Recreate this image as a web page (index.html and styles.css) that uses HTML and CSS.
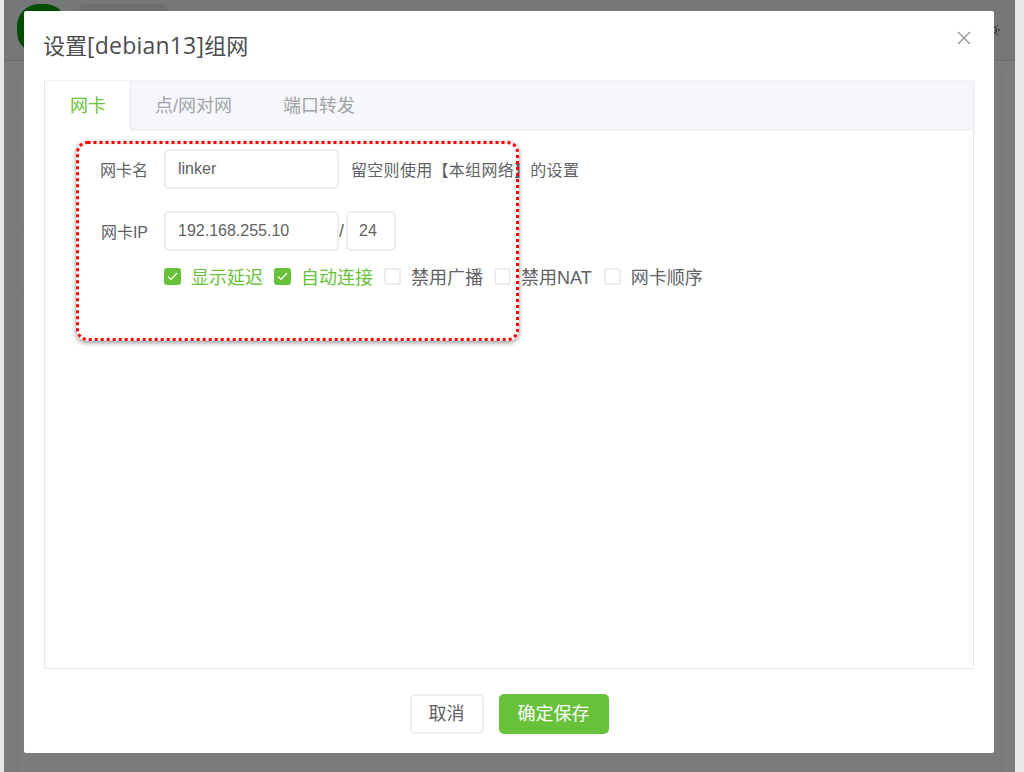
FILE: index.html
```html
<!DOCTYPE html>
<html lang="zh">
<head>
<meta charset="utf-8">
<title>设置组网</title>
<link rel="stylesheet" href="styles.css">
</head>
<body>
<div class="app">
  <header class="app-head">
    <div class="logo"></div>
    <div class="pill"></div>
    <svg class="sun" width="16" height="16" viewBox="0 0 16 16"><circle cx="8" cy="8" r="3.5" fill="none" stroke="#333"/><path d="M8 1v2M8 13v2M1 8h2M13 8h2M3 3l1.5 1.5M11.500 11.500 13 13M3 13l1.500-1.500M11.500 4.500 13 3" stroke="#333"/></svg>
  </header>
  <div class="app-body">
    <div class="app-card">
      <div class="card-row head"></div>
      <div class="card-row mid"></div>
      <div class="card-row tall"></div>
      <div class="card-row tall"></div>
      <div class="card-row rest"></div>
    </div>
  </div>
  <div class="mask">
    <section class="dialog">
      <h2 class="dialog-title">设置<span class="latin">[debian13]</span>组网</h2>
      <svg class="close" width="14" height="14" viewBox="0 0 14 14"><path d="M1 1l12 12M13 1L1 13" stroke="#8c8f96" stroke-width="1.100" fill="none"/></svg>
      <div class="tabs">
        <nav class="tab-bar">
          <span class="tab active">网卡</span>
          <span class="tab">点/网对网</span>
          <span class="tab">端口转发</span>
        </nav>
        <div class="tab-pane">
          <div class="form-row first">
            <label class="form-label">网卡名</label>
            <div class="input wide">linker</div>
            <span class="hint">留空则使用【本组网络】的设置</span>
          </div>
          <div class="form-row second">
            <label class="form-label">网卡IP</label>
            <div class="input wide">192.168.255.10</div>
            <span class="slash">/</span>
            <div class="input mask-input">24</div>
          </div>
          <div class="checks">
            <span class="check on"><i class="box"><svg width="11" height="9" viewBox="0 0 11 9"><path d="M1 4.500l3 3 6-6.500" fill="none" stroke="#fff" stroke-width="1.200"/></svg></i>显示延迟</span>
            <span class="check on"><i class="box"><svg width="11" height="9" viewBox="0 0 11 9"><path d="M1 4.500l3 3 6-6.500" fill="none" stroke="#fff" stroke-width="1.200"/></svg></i>自动连接</span>
            <span class="check"><i class="box"></i>禁用广播</span>
            <span class="check wider"><i class="box"></i>禁用NAT</span>
            <span class="check"><i class="box"></i>网卡顺序</span>
          </div>
        </div>
      </div>
      <footer class="dialog-foot">
        <button class="btn">取消</button>
        <button class="btn primary">确定保存</button>
      </footer>
      <div class="highlight">
        <svg class="dots" width="443" height="200" viewBox="0 0 443 200"><rect x="1.500" y="1.500" width="440" height="197" rx="10" fill="none" stroke="#f00" stroke-width="3" stroke-dasharray="3 3"/></svg>
      </div>
    </section>
  </div>
</div>
</body>
</html>
```
FILE: styles.css
```css
* { box-sizing: border-box; }
html, body { margin: 0; height: 100%; }
body {
  background: #e8e8e8;
  font-family: "Liberation Sans", "Noto Sans CJK SC", sans-serif;
  font-size: 14px;
  color: #606266;
  overflow: hidden;
}
.app {
  position: relative;
  margin: 0 9px 0 4px;
  height: 100%;
  background: #f8f8f8;
  display: flex;
  flex-direction: column;
}
.app-head {
  height: 61px;
  background: #eceef0;
  border-bottom: 1px solid #d8d8d8;
  display: flex;
  align-items: flex-start;
  padding: 4px 0 0 13px;
}
.logo { width: 50px; height: 50px; border-radius: 22px; background: #009a00; }
.pill { width: 88px; height: 32px; margin: 0 0 0 12px; border-radius: 6px; background: #dcdcdc; }
.sun { margin: 18px 14px 0 auto; }
.app-body { flex: 1; padding: 12px 13px 0; }
.app-card {
  height: 100%;
  border: 1px solid #ececec;
  border-bottom: 0;
  display: flex;
  flex-direction: column;
}
.card-row { border-bottom: 1px solid #f0f0f0; }
.head { height: 41px; }
.mid { height: 41px; }
.tall { height: 70px; }
.rest { flex: 1; border-bottom: 0; }
.mask {
  position: absolute;
  inset: 0;
  background: rgba(0, 0, 0, .5);
  padding: 11px 21px 19px 20px;
}
.dialog {
  position: relative;
  height: 742px;
  background: #fff;
  border-radius: 2px;
  padding: 0 20px;
  display: flex;
  flex-direction: column;
}
.dialog-title {
  margin: 0 0 0 -1px;
  padding-top: 19px;
  height: 69px;
  font-size: 22px;
  line-height: 30px;
  font-weight: 400;
  color: #4a4c50;
}
.latin { font-family: "Open Sans", sans-serif; font-size: 23px; letter-spacing: .2px; }
.close { position: absolute; right: 23px; top: 20px; }
.tabs {
  height: 589px;
  border: 1px solid #e4e7ed;
  border-top-color: #f0f0f5;
  display: flex;
  flex-direction: column;
}
.tab-bar {
  display: flex;
  height: 49px;
  background: #f5f7fa;
  border-bottom: 1px solid #e9e9f0;
  font-size: 18px;
  color: #a1a3a8;
}
.tab { padding: 0 25px; line-height: 50px; height: 49px; white-space: nowrap; }
.tab:nth-child(2) { padding-left: 24px; padding-right: 26px; }
.tab.active {
  background: #fff;
  color: #67c23a;
  width: 86px;
  padding: 0 0 0 25px;
  border-right: 1px solid #e4e7ed;
  border-bottom: 1px solid #fff;
}
.tab-pane { flex: 1; padding: 19px 0 0 55px; font-size: 16px; }
.form-row { display: flex; align-items: center; height: 40px; }
.second { margin-top: 22px; }
.form-label { width: 48px; text-align: right; font-size: 16px; margin-right: 16px; }
.input {
  height: 40px;
  border: 2px solid #ececf2;
  border-radius: 5px;
  line-height: 35px;
  padding-left: 12px;
  font-size: 16px;
  color: #606266;
}
.wide { width: 175px; }
.mask-input { width: 50px; padding-left: 11px; }
.hint { margin-left: 12px; letter-spacing: .3px; }
.slash { width: 7px; margin-left: 0; font-size: 18px; }
.checks { display: flex; height: 40px; align-items: center; margin: 5px 0 0 64px; font-size: 18px; }
.check { display: flex; align-items: center; margin-right: 11px; white-space: nowrap; }
.check.wider { margin-right: 12px; }
.check.on { color: #67c23a; }
.box {
  width: 17px; height: 17px; margin-right: 10px;
  border: 2px solid #eaecf0; border-radius: 3px;
  display: flex; align-items: center; justify-content: center;
}
.check.on .box { background: #67c23a; border-color: #67c23a; }
.dialog-foot {
  flex: 1;
  display: flex;
  justify-content: center;
  gap: 15px;
  padding-top: 25px;
}
.btn {
  width: 74px;
  height: 40px;
  border: 2px solid #ececf2;
  border-radius: 5px;
  background: #fff;
  font: 18px "Liberation Sans", "Noto Sans CJK SC", sans-serif;
  color: #606266;
  padding: 0 0 4px;
}
.btn.primary { width: 110px; background: #67c23a; border-color: #67c23a; color: #fff; }
.highlight {
  position: absolute;
  left: 52px; top: 130px;
  width: 443px; height: 200px;
  border-radius: 10px;
  box-shadow: 0 2px 5px rgba(0,0,0,.4), inset 0 2px 5px rgba(0,0,0,.14);
}
.dots { display: block; }
```
